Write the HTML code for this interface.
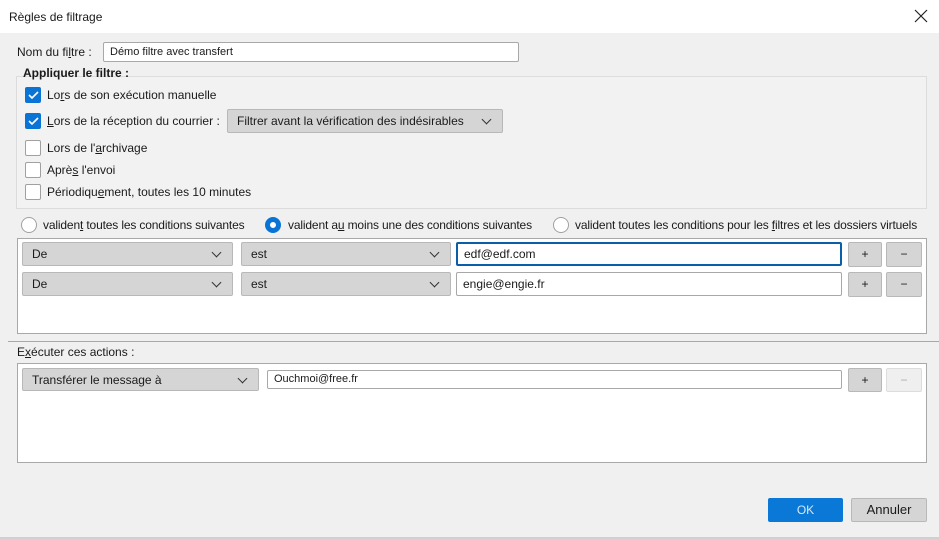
<!DOCTYPE html>
<html><head><meta charset="utf-8"><style>
*{box-sizing:border-box;margin:0;padding:0}
body{width:939px;height:539px;background:#f0f0f0;font-family:"Liberation Sans",sans-serif;font-size:12px;color:#1a1a1a;position:relative;overflow:hidden}
.a{position:absolute}
.t{position:absolute;white-space:nowrap;line-height:14px}
.cb{position:absolute;width:16px;height:16px;border:1px solid #a0a0a0;background:#fff;border-radius:2px}
.cb.on{background:#0a74d6;border-color:#0a74d6}
.sel{position:absolute;background:#d5d5d5;border:1px solid #b8b8b8;border-radius:2px;padding-left:9px;line-height:22px}
.sel:after{content:"";position:absolute;right:12px;top:6px;width:6px;height:6px;border-right:1px solid #333;border-bottom:1px solid #333;transform:rotate(45deg)}
.inp{position:absolute;background:#fff;border:1px solid #a8a8a8;border-radius:2px;padding-left:6px;line-height:20px}
.btn{position:absolute;background:#d5d5d5;border:1px solid #b8b8b8;border-radius:2px;text-align:center;line-height:22px;font-size:12px}
.rad{position:absolute;width:16px;height:16px;border:1px solid #a0a0a0;border-radius:50%;background:#fff}
</style></head><body>
<div class="a" style="left:0;top:0;width:939px;height:33px;background:#fff"></div>
<div class="t" style="left:9px;top:10px">Règles de filtrage</div>
<svg class="a" style="left:914px;top:9px" width="14" height="14"><path d="M1 1L13 13M13 1L1 13" stroke="#222" stroke-width="1.2"/></svg>

<div class="t" style="left:17px;top:45px">Nom du fi<u>l</u>tre :</div>
<div class="inp" style="left:103px;top:42px;width:416px;height:20px;line-height:18px;font-size:11px">Démo filtre avec transfert</div>
<div class="a" style="left:16px;top:76px;width:911px;height:133px;border:1px solid #dcdcdc;background:#f2f2f2"></div>
<div class="t" style="left:23px;top:66px;font-weight:bold">Appliquer le filtre :</div>
<div class="cb on" style="left:25px;top:87px"><svg width="14" height="14"><path d="M3 7l3 3 6-6" stroke="#fff" stroke-width="1.6" fill="none"/></svg></div>
<div class="t" style="left:47px;top:88px">Lo<u>r</u>s de son exécution manuelle</div>
<div class="cb on" style="left:25px;top:113px"><svg width="14" height="14"><path d="M3 7l3 3 6-6" stroke="#fff" stroke-width="1.6" fill="none"/></svg></div>
<div class="t" style="left:47px;top:114px"><u>L</u>ors de la réception du courrier :</div>
<div class="sel" style="left:227px;top:109px;width:276px;height:24px">Filtrer avant la vérification des indésirables</div>
<div class="cb" style="left:25px;top:140px"></div>
<div class="t" style="left:47px;top:141px">Lors de l'<u>a</u>rchivage</div>
<div class="cb" style="left:25px;top:162px"></div>
<div class="t" style="left:47px;top:163px">Aprè<u>s</u> l'envoi</div>
<div class="cb" style="left:25px;top:184px"></div>
<div class="t" style="left:47px;top:185px">Périodiqu<u>e</u>ment, toutes les 10 minutes</div>

<div class="rad" style="left:21px;top:217px"></div>
<div class="t" style="left:43px;top:218px;letter-spacing:-0.15px">validen<u>t</u> toutes les conditions suivantes</div>
<div class="rad" style="left:265px;top:217px;border:5px solid #0a74d6"></div>
<div class="t" style="left:288px;top:218px;letter-spacing:-0.15px">valident a<u>u</u> moins une des conditions suivantes</div>
<div class="rad" style="left:553px;top:217px"></div>
<div class="t" style="left:575px;top:218px;letter-spacing:-0.15px">valident toutes les conditions pour les <u>f</u>iltres et les dossiers virtuels</div>

<div class="a" style="left:17px;top:238px;width:910px;height:96px;background:#fff;border:1px solid #a8a8a8"></div>
<div class="sel" style="left:22px;top:242px;width:211px;height:24px">De</div>
<div class="sel" style="left:241px;top:242px;width:210px;height:24px">est</div>
<div class="inp" style="left:456px;top:242px;width:386px;height:24px;border:2px solid #0a5fa8;line-height:20px">edf@edf.com</div>
<div class="btn" style="left:848px;top:242px;width:34px;height:25px">+</div>
<div class="btn" style="left:886px;top:242px;width:36px;height:25px">−</div>
<div class="sel" style="left:22px;top:272px;width:211px;height:24px">De</div>
<div class="sel" style="left:241px;top:272px;width:210px;height:24px">est</div>
<div class="inp" style="left:456px;top:272px;width:386px;height:24px;line-height:22px">engie@engie.fr</div>
<div class="btn" style="left:848px;top:272px;width:34px;height:25px">+</div>
<div class="btn" style="left:886px;top:272px;width:36px;height:25px">−</div>

<div class="a" style="left:8px;top:341px;width:931px;height:1px;background:#a8a8a8"></div>
<div class="t" style="left:17px;top:345px">E<u>x</u>écuter ces actions :</div>
<div class="a" style="left:17px;top:363px;width:910px;height:100px;background:#fff;border:1px solid #a8a8a8"></div>
<div class="sel" style="left:22px;top:368px;width:237px;height:23px">Transférer le message à</div>
<div class="inp" style="left:267px;top:370px;width:575px;height:19px;line-height:17px;font-size:11px">Ouchmoi@free.fr</div>
<div class="btn" style="left:848px;top:368px;width:34px;height:24px">+</div>
<div class="btn" style="left:886px;top:368px;width:36px;height:24px;background:#efefef;border-color:#ddd;color:#aaa">−</div>

<div class="btn" style="left:768px;top:498px;width:75px;height:24px;background:#0a78d7;border-color:#0a78d7;color:#d8e8f8">OK</div>
<div class="btn" style="left:851px;top:498px;width:76px;height:24px;font-size:13px">Annuler</div>
<div class="a" style="left:0;top:537px;width:939px;height:2px;background:#d0d0d0"></div>
</body></html>
